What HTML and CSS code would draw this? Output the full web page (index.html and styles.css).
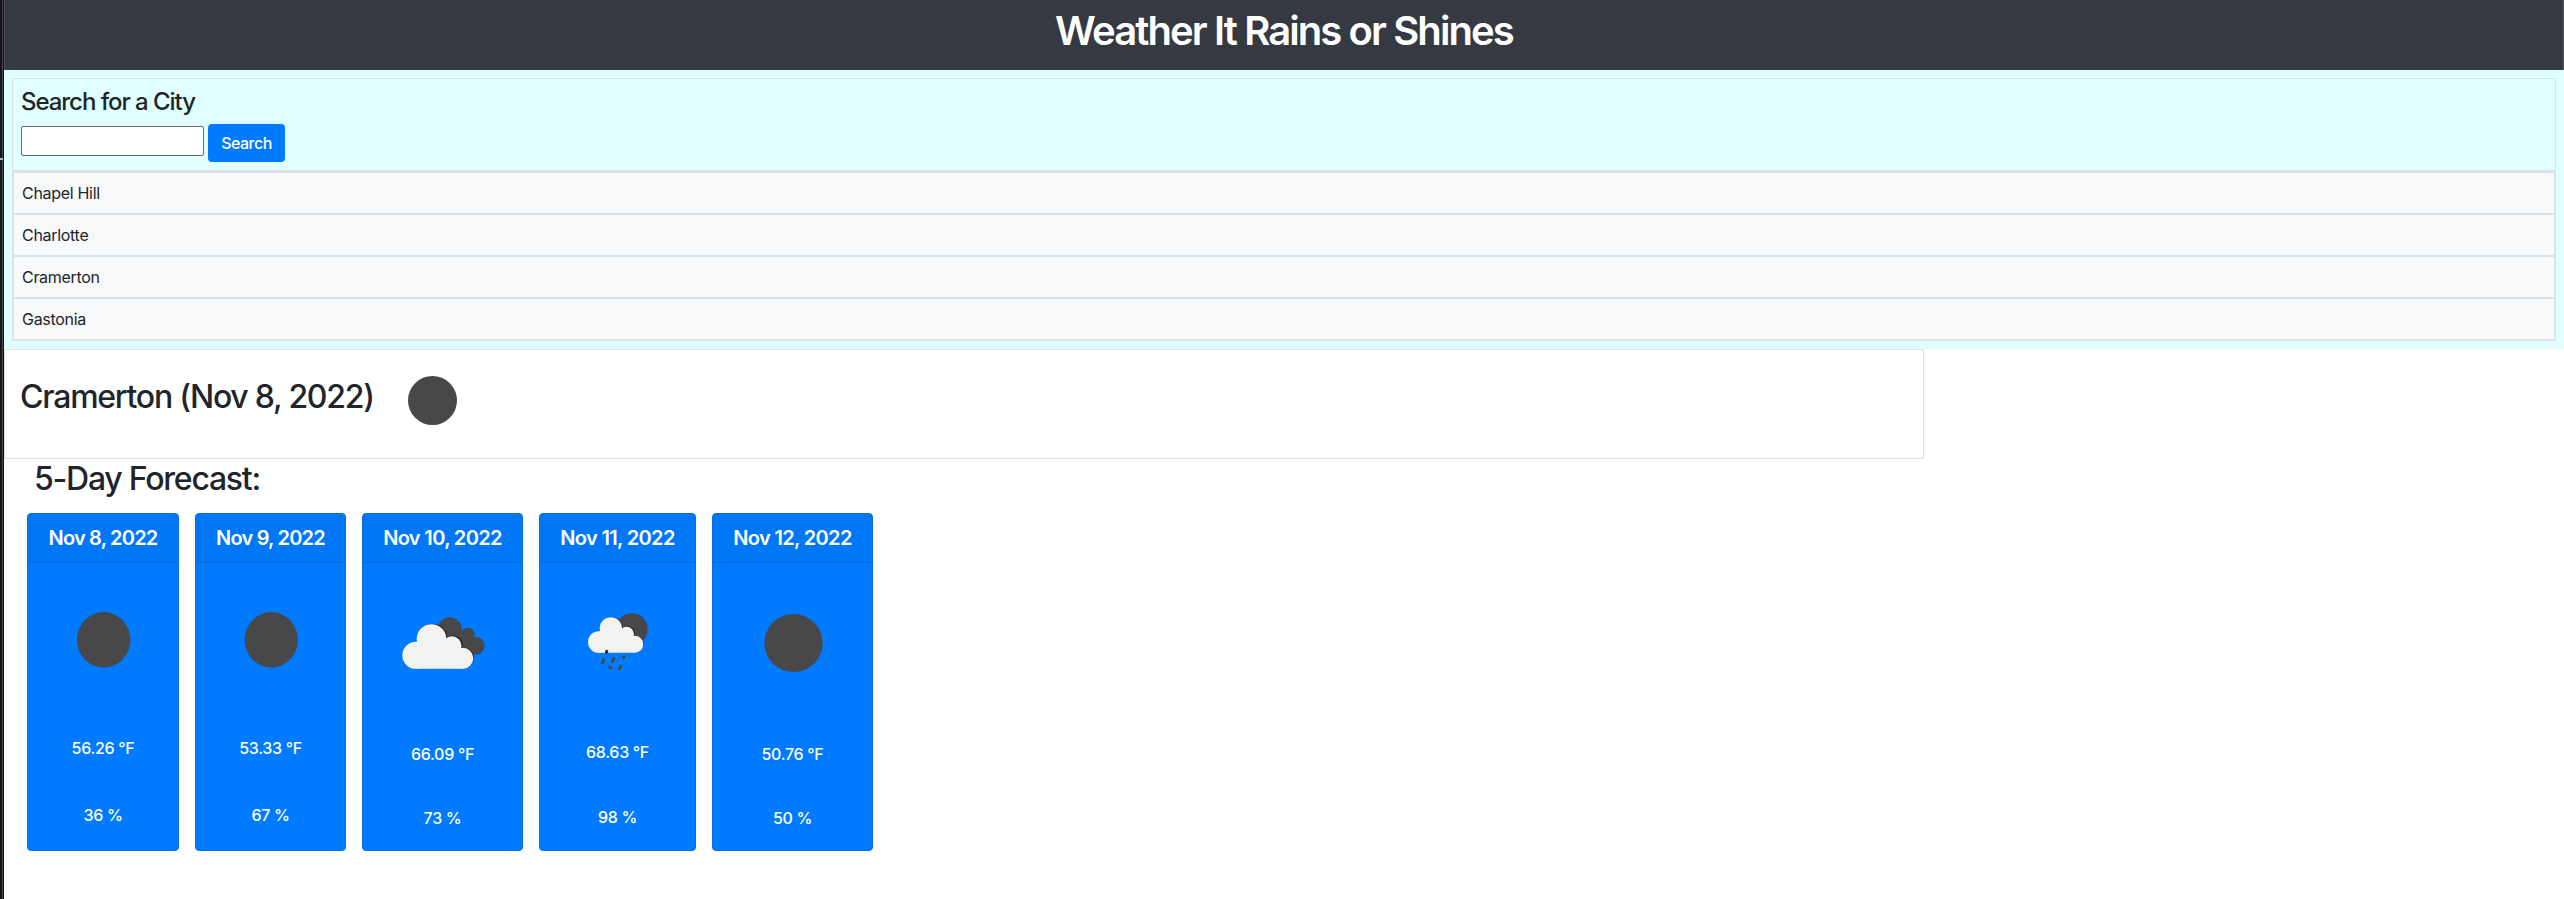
FILE: index.html
```html
<!DOCTYPE html>
<html lang="en">
<head>
<meta charset="utf-8">
<title>Weather It Rains or Shines</title>
<link rel="stylesheet" href="styles.css">
</head>
<body>
<div class="edge"><span class="edge-mark"></span></div>
<div class="page">
  <header class="banner"><h1>Weather It Rains or Shines</h1></header>
  <section class="search">
    <div class="search-box">
      <form class="search-form">
        <h4>Search for a City</h4>
        <div class="controls"><input type="text" class="field" aria-label="City"><button type="button" class="btn">Search</button></div>
      </form>
      <ul class="cities">
        <li>Chapel Hill</li>
        <li>Charlotte</li>
        <li>Cramerton</li>
        <li>Gastonia</li>
      </ul>
    </div>
  </section>
  <section class="current">
    <h2>Cramerton (Nov 8, 2022)</h2>
    <svg class="moon" viewBox="0 0 49 49"><circle cx="24.5" cy="24.5" r="24.5" fill="#48484a"/></svg>
  </section>
  <h2 class="forecast-title">5-Day Forecast:</h2>
  <section class="forecast">
    <article class="card w152">
      <h5 class="short">Nov 8, 2022</h5>
      <svg class="icon" viewBox="0 0 100 100"><ellipse cx="50.7" cy="49.8" rx="26.8" ry="27.7" fill="#48484a"/></svg>
      <p class="temp">56.26 °F</p><p class="hum">36 %</p>
    </article>
    <article class="card w151">
      <h5 class="short">Nov 9, 2022</h5>
      <svg class="icon" viewBox="0 0 100 100"><ellipse cx="50.3" cy="49.8" rx="26.7" ry="27.7" fill="#48484a"/></svg>
      <p class="temp">53.33 °F</p><p class="hum">67 %</p>
    </article>
    <article class="card w161 low">
      <h5>Nov 10, 2022</h5>
      <svg class="icon" viewBox="37.5 0 300 300">
        <g fill="#48484a"><circle cx="208" cy="118" r="36"/><circle cx="262" cy="134" r="21"/><circle cx="286" cy="167" r="26.5"/><path d="M200 120L240 120L265 150L285 193L250 190L200 150Z"/></g>
        <g fill="#2e2e30"><circle cx="156" cy="147" r="46"/><circle cx="218" cy="166" r="30"/><circle cx="250" cy="203" r="31"/></g>
        <g fill="#f2f2f1"><circle cx="106" cy="196" r="40.5"/><circle cx="153" cy="147" r="44.5"/><circle cx="214" cy="168" r="29"/><circle cx="247" cy="205" r="31.5"/><path d="M106 160L150 120L215 165L247 200V236.500H106Z"/></g>
      </svg>
      <p class="temp">66.09 °F</p><p class="hum">73 %</p>
    </article>
    <article class="card w157 mid">
      <h5>Nov 11, 2022</h5>
      <svg class="icon" viewBox="562.5 0 300 300">
        <path fill="#48484a" d="M706 114A48 48 0 1 1 790 149L760 150L706 120Z"/>
        <g fill="#2e2e30"><circle cx="693" cy="115" r="34"/><circle cx="741" cy="131" r="22.500"/><circle cx="765" cy="162" r="25"/></g>
        <g fill="#f2f2f1"><circle cx="655" cy="156" r="32.500"/><circle cx="691" cy="115" r="33.500"/><circle cx="738" cy="133" r="22.500"/><circle cx="763" cy="163" r="25.500"/><path d="M655 125L690 95L738 130L763 165V188.500H655Z"/></g>
        <g stroke="#48484a" stroke-width="9" stroke-linecap="round"><path d="M678 187L679 184" stroke="#242426"/><path d="M666 219L670 210M696 215L700 206M716 237L720 229M688 233L690 232M729 203L731 200"/></g>
      </svg>
      <p class="temp">68.63 °F</p><p class="hum">98 %</p>
    </article>
    <article class="card w161 low">
      <h5>Nov 12, 2022</h5>
      <svg class="icon" viewBox="0 0 100 100"><ellipse cx="50.5" cy="53" rx="29.200" ry="29" fill="#48484a"/></svg>
      <p class="temp">50.76 °F</p><p class="hum">50 %</p>
    </article>
  </section>
</div>
</body>
</html>
```
FILE: styles.css
```css
* { box-sizing: border-box; }
body { margin: 0; display: flex; height: 899px; overflow: hidden; background: #fff; color: #212529; font: 400 16px/24px Inter, "Liberation Sans", sans-serif; }
h1, h2, h4, h5, p, ul { margin: 0; padding: 0; font-weight: 500; }
h1, h5 { font-weight: 600; }
.edge { width: 4px; flex: none; padding-top: 158px; background: linear-gradient(90deg, #161616 0 2px, #4c4a50 2px 3px, #120a26 3px 4px); }
.edge-mark { display: block; width: 3px; height: 2px; background: #b9b9b9; }
.page { flex: 1; min-width: 0; }
.banner { height: 70px; padding-top: 7px; background: #353a42; border-right: 1px solid #555a62; border-left: 1px solid #4d5058; color: #fff; text-align: center; }
.banner h1 { font-size: 40px; line-height: 48px; letter-spacing: -1.9px; }
.search { height: 279px; padding: 8px; background: #e0ffff; }
.search-box { border: 1px solid #dee2e6; }
.search-form { height: 92px; padding: 8px; border-bottom: 1px solid #dee2e6; }
.search-form h4 { font-size: 24px; line-height: 29px; letter-spacing: -1.05px; }
.controls { display: flex; gap: 4px; margin-top: 8px; }
.field { width: 183px; height: 30px; margin-top: 2px; padding: 0; border: 1px solid #6b6b6b; border-radius: 2px; background: #fff; }
.btn { width: 77px; height: 38px; padding: 0; border: 0; border-radius: 4px; background: #007bff; color: #fff; font: 500 16px/24px Inter, sans-serif; letter-spacing: -.5px; }
.cities { list-style: none; border: 1px solid #dee2e6; border-top: 0; }
.cities li { height: 42px; padding: 8px; border-top: 2px solid #dee2e6; background: #f8f9fa; font-weight: 400; letter-spacing: -.3px; }
.current { display: flex; width: 1920px; height: 110px; padding: 26px 17px 0 15px; border: 1px solid #dee2e6; }
h2 { font-size: 32px; line-height: 38px; letter-spacing: -1.25px; }
.current h2 { width: 388px; margin-top: 2px; white-space: nowrap; }
.moon { width: 49px; height: 49px; }
.forecast-title { padding: 1px 0 0 30px; height: 54px; }
.forecast { display: flex; gap: 16px; padding-left: 23px; }
.card { height: 338px; border: 1px solid #0a6fdc; border-radius: 4px; background: #007bff; color: #fff; text-align: center; }
.w151 { width: 151px; }
.w152 { width: 152px; }
.w157 { width: 157px; }
.w161 { width: 161px; }
.card h5 { height: 49px; padding-top: 12px; border-bottom: 1px solid #066bd8; background: #0077f7; font-size: 20px; line-height: 24px; letter-spacing: -.65px; }
.card .short { letter-spacing: -.8px; }
.icon { display: block; width: 100px; height: 100px; margin: 27px auto 46px; }
.temp, .hum { height: 24px; letter-spacing: -.3px; }
.hum { margin-top: 43px; }
.low .icon { margin-bottom: 52px; }
.low .hum { margin-top: 40px; }
.mid .icon { margin-bottom: 50px; }
.mid .hum { margin-top: 41px; }
```
